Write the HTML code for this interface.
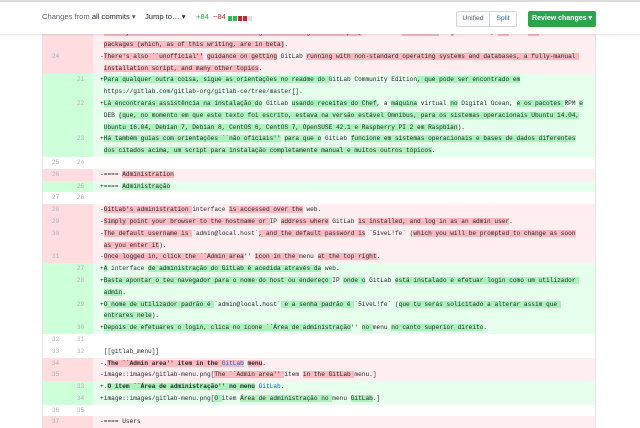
<!DOCTYPE html>
<html><head><meta charset="utf-8"><style>
*{margin:0;padding:0;box-sizing:border-box}
body{width:640px;height:425px;overflow:hidden;background:#fff;position:relative;font-family:"Liberation Sans",sans-serif}
#hdr{position:absolute;left:0;top:0;width:640px;height:34px;background:#fff;border-top:2px solid #ddd;box-shadow:0 1px 2px rgba(0,0,0,.12);z-index:5}
.ht{position:absolute;top:10px;font-size:7.6px;color:#586069;white-space:nowrap}
.ht b{color:#24292e;font-weight:normal}
.btn{position:absolute;top:9px;height:16px;border:1px solid #d1d5da;background:#fafbfc;font-size:6.8px;line-height:14px;text-align:center;color:#586069}
#rev{position:absolute;left:528px;top:9px;width:68px;height:16px;background:#2ea44f;border:1px solid #28a745;border-radius:2px;color:#fff;font-size:7px;line-height:14px;text-align:center;font-weight:bold}
#diff{position:absolute;left:42px;top:27.2px;width:554px;border-left:1px solid #e1e4e8;border-right:1px solid #e1e4e8}
.r{height:11.8px;display:flex;font-family:"Liberation Mono",monospace;font-size:6.15px;line-height:11.8px;color:#24292e;white-space:pre}
.n{width:25px;text-align:center;color:#b0b0b0;flex:none}
.c{padding-left:7px;flex:1;overflow:hidden}
.s{display:inline-block;width:3.8px}
.d{background:#ffeef0}.d .n{background:#ffdce0}
.a{background:#e6ffed}.a .n{background:#cdffd8}
.d i{font-style:normal;background:#fdb8c0}
.a i{font-style:normal;background:#acf2bd}
</style></head><body>
<div id="hdr">
<div class="ht" style="left:42px">Changes from <b>all commits</b> ▾</div>
<div class="ht" style="left:145px;color:#24292e">Jump to… ▾</div>
<div class="ht" style="left:196px;color:#28a745">+84</div>
<div class="ht" style="left:213px;color:#cb2431">−84</div>
<div style="position:absolute;left:228px;top:14px;width:24px;height:5px;display:flex;gap:1px">
<span style="flex:1;background:#2cbe4e"></span><span style="flex:1;background:#2cbe4e"></span><span style="flex:1;background:#cb2431"></span><span style="flex:1;background:#cb2431"></span><span style="flex:1;background:#ddd"></span></div>
<div class="btn" style="left:456px;width:34px;border-radius:2px 0 0 2px">Unified</div>
<div class="btn" style="left:489px;width:28px;color:#0366d6;background:#fff;border-radius:0 2px 2px 0">Split</div>
<div id="rev">Review changes ▾</div>
</div>
<div id="diff">
<div class="r d"><span class="n">23</span><span class="n"></span><span class="c"><span class="s">-</span><i>There you'll find assistance for installing GitLab using Chef recipes,</i> a virtual <i>machine on</i> Digital Ocean, <i>and</i> RPM <i>and</i> DEB</span></div>
<div class="r d"><span class="n"></span><span class="n"></span><span class="c"><span class="s"></span><i>packages (which, as of this writing, are in beta)</i>.</span></div>
<div class="r d"><span class="n">24</span><span class="n"></span><span class="c"><span class="s">-</span><i>There's also ``unofficial''</i> <i>guidance on getting</i> GitLab <i>running with non-standard operating systems and databases, a fully-manual </i></span></div>
<div class="r d"><span class="n"></span><span class="n"></span><span class="c"><span class="s"></span><i>installation script, and many other topics</i>.</span></div>
<div class="r a"><span class="n"></span><span class="n">21</span><span class="c"><span class="s">+</span><i>Para qualquer outra coisa, sigue as orientações no readme do </i>GitLab Community Edition<i>, que pode ser encontrado em</i></span></div>
<div class="r a"><span class="n"></span><span class="n"></span><span class="c"><span class="s"></span>https://gitlab.com/gitlab-org/gitlab-ce/tree/master[].</span></div>
<div class="r a"><span class="n"></span><span class="n">22</span><span class="c"><span class="s">+</span><i>Lá encontrarás assistência na instalação do</i> GitLab <i>usando receitas do Chef</i>, a <i>máquina</i> virtual <i>no</i> Digital Ocean, <i>e os pacotes </i>RPM <i>e</i></span></div>
<div class="r a"><span class="n"></span><span class="n"></span><span class="c"><span class="s"></span>DEB <i>(que, no momento em que este texto foi escrito, estava na versão estável Omnibus, para os sistemas operacionais Ubuntu 14.04,</i></span></div>
<div class="r a"><span class="n"></span><span class="n"></span><span class="c"><span class="s"></span><i>Ubuntu 16.04, Debian 7, Debian 8, CentOS 6, CentOS 7, OpenSUSE 42.1 e Raspberry PI 2 em Raspbian</i>).</span></div>
<div class="r a"><span class="n"></span><span class="n">23</span><span class="c"><span class="s">+</span><i>Há também guias com orientações ``não oficiais''</i> <i>para que o</i> GitLab <i>funcione em sistemas operacionais e bases de dados diferentes</i></span></div>
<div class="r a"><span class="n"></span><span class="n"></span><span class="c"><span class="s"></span><i>dos citados acima, um script para instalação completamente manual e muitos outros tópicos</i>.</span></div>
<div class="r"><span class="n">25</span><span class="n">24</span><span class="c"></span></div>
<div class="r d"><span class="n">26</span><span class="n"></span><span class="c"><span class="s">-</span>==== <i>Administration</i></span></div>
<div class="r a"><span class="n"></span><span class="n">25</span><span class="c"><span class="s">+</span>==== <i>Administração</i></span></div>
<div class="r"><span class="n">27</span><span class="n">26</span><span class="c"></span></div>
<div class="r d"><span class="n">28</span><span class="n"></span><span class="c"><span class="s">-</span><i>GitLab's administration </i>interface <i>is accessed over the</i> web.</span></div>
<div class="r d"><span class="n">29</span><span class="n"></span><span class="c"><span class="s">-</span><i>Simply point your browser to the hostname or </i>IP <i>address where</i> GitLab <i>is installed, and log in as an admin user</i>.</span></div>
<div class="r d"><span class="n">30</span><span class="n"></span><span class="c"><span class="s">-</span><i>The default username is </i>`admin@local.host`<i>, and the default password is</i> `5iveL!fe` (<i>which you will be prompted to change as soon</i></span></div>
<div class="r d"><span class="n"></span><span class="n"></span><span class="c"><span class="s"></span><i>as you enter it</i>).</span></div>
<div class="r d"><span class="n">31</span><span class="n"></span><span class="c"><span class="s">-</span><i>Once logged in, click the ``Admin area</i>'' <i>icon in the </i>menu <i>at the top right</i>.</span></div>
<div class="r a"><span class="n"></span><span class="n">27</span><span class="c"><span class="s">+</span><i>A</i> interface <i>de administração do GitLab é acedida através da</i> web.</span></div>
<div class="r a"><span class="n"></span><span class="n">28</span><span class="c"><span class="s">+</span><i>Basta apontar o teu navegador para o nome do host ou endereço </i>IP <i>onde o</i> GitLab <i>está instalado e efetuar login como um utilizador </i></span></div>
<div class="r a"><span class="n"></span><span class="n"></span><span class="c"><span class="s"></span><i>admin</i>.</span></div>
<div class="r a"><span class="n"></span><span class="n">29</span><span class="c"><span class="s">+</span><i>O nome de utilizador padrão é </i>`admin@local.host`<i> e a senha padrão é </i>`5iveL!fe` (<i>que tu serás solicitado a alterar assim que </i></span></div>
<div class="r a"><span class="n"></span><span class="n"></span><span class="c"><span class="s"></span><i>entrares nele</i>).</span></div>
<div class="r a"><span class="n"></span><span class="n">30</span><span class="c"><span class="s">+</span><i>Depois de efetuares o login, clica no ícone ``Área de administração</i>'' <i>no </i>menu <i>no canto superior direito</i>.</span></div>
<div class="r"><span class="n">32</span><span class="n">31</span><span class="c"></span></div>
<div class="r"><span class="n">33</span><span class="n">32</span><span class="c"><span class="s"></span>[[gitlab_menu]]</span></div>
<div class="r d"><span class="n">34</span><span class="n"></span><span class="c"><span class="s">-</span>.<i><b>The ``Admin area'' item in the </b></i><span style="color:#0366d6;background:#fdb8c0">GitLab</span> <i><b>menu</b></i>.</span></div>
<div class="r d"><span class="n">35</span><span class="n"></span><span class="c"><span class="s">-</span>image::images/gitlab-menu.png[<i>The ``Admin area'' </i>item <i>in the GitLab </i>menu.]</span></div>
<div class="r a"><span class="n"></span><span class="n">33</span><span class="c"><span class="s">+</span>.<i><b>O item ``Área de administração'' no menu</b></i> <span style="color:#0366d6">GitLab</span>.</span></div>
<div class="r a"><span class="n"></span><span class="n">34</span><span class="c"><span class="s">+</span>image::images/gitlab-menu.png[<i>O </i>item <i>Área de administração no </i>menu <i>GitLab</i>.]</span></div>
<div class="r"><span class="n">36</span><span class="n">35</span><span class="c"></span></div>
<div class="r d"><span class="n">37</span><span class="n"></span><span class="c"><span class="s">-</span>==== Users</span></div>
</div>
</body></html>
